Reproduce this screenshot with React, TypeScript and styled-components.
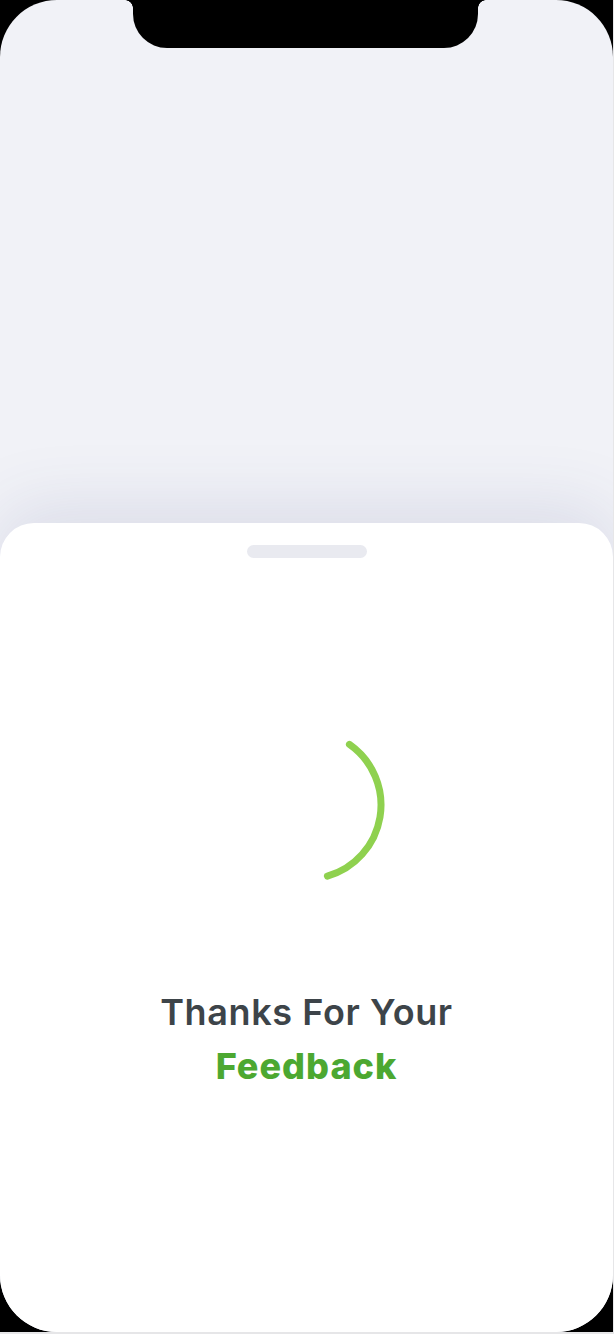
import React from "react";
import styled, { createGlobalStyle } from "styled-components";

const Global = createGlobalStyle`
  html, body {
    margin: 0;
    padding: 0;
    background: #e6e6e8;
  }
  body {
    font-family: "Inter", "Open Sans", "Liberation Sans", sans-serif;
  }
`;

const Frame = styled.div`
  width: 613px;
  height: 1332px;
  background: #000;
  display: flex;
  flex-direction: column;
`;

const Screen = styled.div`
  position: relative;
  flex: 1;
  display: flex;
  flex-direction: column;
  border-radius: 57px;
  background: #f1f2f7;
  overflow: hidden;
`;

const Notch = styled.div`
  position: absolute;
  top: 0;
  left: 133px;
  width: 345px;
  height: 48px;
  background: #000;
  border-radius: 0 0 34px 34px;
  z-index: 2;

  &::before,
  &::after {
    content: "";
    position: absolute;
    top: 0;
    width: 8px;
    height: 8px;
  }
  &::before {
    left: -8px;
    background: radial-gradient(circle at 0 100%, transparent 7.5px, #000 8px);
  }
  &::after {
    right: -8px;
    background: radial-gradient(circle at 100% 100%, transparent 7.5px, #000 8px);
  }
`;

const Backdrop = styled.div`
  height: 523px;
  flex: none;
`;

const Sheet = styled.div`
  flex: 1;
  display: flex;
  flex-direction: column;
  align-items: center;
  background: #fff;
  border-radius: 34px 34px 0 0;
  box-shadow: 0 -14px 70px rgba(60, 70, 130, 0.13);
  padding-top: 22px;
`;

const Handle = styled.div`
  width: 120px;
  height: 13px;
  border-radius: 7px;
  background: #e9eaf0;
`;

const Spinner = styled.svg`
  margin-top: 167px;
  width: 160px;
  height: 160px;
  display: block;
`;

const Title = styled.h2`
  margin: 100px 0 0;
  text-align: center;
  font-family: "Inter", "Open Sans", "Liberation Sans", sans-serif;
  font-weight: 600;
  font-size: 36px;
  line-height: 54px;
  letter-spacing: 0.6px;
  color: #3d4449;
`;

const Accent = styled.span`
  display: block;
  font-weight: 800;
  letter-spacing: 1px;
  color: #4ca831;
`;

function arcPath(cx: number, cy: number, r: number, a0: number, a1: number) {
  const rad = (a: number) => (a * Math.PI) / 180;
  const x0 = cx + r * Math.cos(rad(a0));
  const y0 = cy + r * Math.sin(rad(a0));
  const x1 = cx + r * Math.cos(rad(a1));
  const y1 = cy + r * Math.sin(rad(a1));
  const large = a1 - a0 > 180 ? 1 : 0;
  return `M ${x0.toFixed(2)} ${y0.toFixed(2)} A ${r} ${r} 0 ${large} 1 ${x1.toFixed(2)} ${y1.toFixed(2)}`;
}

export default function App() {
  return (
    <>
      <Global />
      <Frame>
        <Screen>
          <Notch />
          <Backdrop />
          <Sheet>
            <Handle />
            <Spinner viewBox="0 0 160 160">
              <path
                d={arcPath(80, 80, 74, -55, 74)}
                fill="none"
                stroke="#8fd14f"
                strokeWidth={7}
                strokeLinecap="round"
              />
            </Spinner>
            <Title>
              Thanks For Your
              <Accent>Feedback</Accent>
            </Title>
          </Sheet>
        </Screen>
      </Frame>
    </>
  );
}
